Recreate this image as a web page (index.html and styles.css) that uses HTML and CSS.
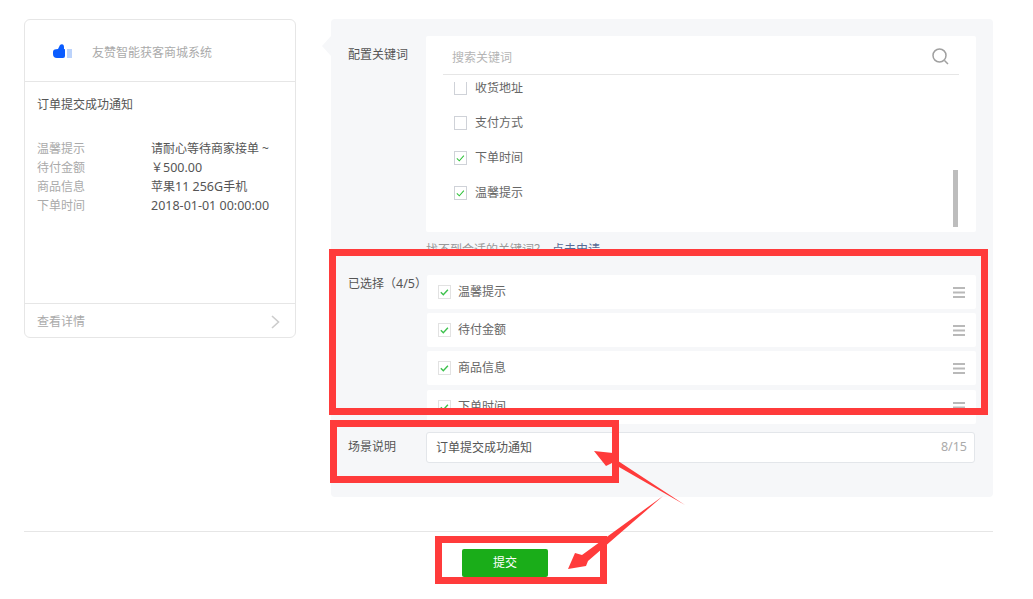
FILE: index.html
```html
<!DOCTYPE html>
<html lang="zh-CN">
<head>
<meta charset="utf-8">
<title>订单提交成功通知</title>
<link rel="stylesheet" href="styles.css">
</head>
<body>
<div class="page">
  <div class="top">
    <aside class="card">
      <div class="card-head">
        <svg class="thumb" width="19" height="15" viewBox="0 0 19 15"><path fill="#0a5cff" d="M5 5L7 1Q8.500-0.300 10 0.500Q11 1 11 3V5H11.500Q12 5 12 6V12Q12 14 10 14H4Q0 14 0 10V8Q0 5.500 3 5.200Z"/><rect fill="#bcd3fb" x="14" y="5" width="5" height="9"/></svg>
        <span class="brand">友赞智能获客商城系统</span>
      </div>
      <div class="card-body">
        <div class="card-title">订单提交成功通知</div>
        <dl class="info">
          <div class="info-row"><dt>温馨提示</dt><dd>请耐心等待商家接单 ~</dd></div>
          <div class="info-row"><dt>待付金额</dt><dd>￥<span class="latin">500.00</span></dd></div>
          <div class="info-row"><dt>商品信息</dt><dd>苹果<span class="latin">11 256G</span>手机</dd></div>
          <div class="info-row"><dt>下单时间</dt><dd><span class="latin">2018-01-01 00:00:00</span></dd></div>
        </dl>
      </div>
      <div class="card-foot">
        <span>查看详情</span>
        <svg width="9" height="14" viewBox="0 0 9 14"><path d="M1 1l6.500 6-6.500 6" fill="none" stroke="#ccc" stroke-width="1.600"/></svg>
      </div>
    </aside>

    <section class="panel">
      <div class="row row-keywords">
        <div class="label">配置关键词</div>
        <div class="content">
          <div class="kw-box">
            <div class="search">
              <span class="placeholder">搜索关键词</span>
              <svg class="search-icon" width="17" height="17" viewBox="0 0 17 17"><circle cx="7.500" cy="7.500" r="6.500" fill="none" stroke="#a0a0a0" stroke-width="1.500"/><path d="M12.500 12.500l3.500 3.500" stroke="#a0a0a0" stroke-width="1.500" fill="none"/></svg>
            </div>
            <ul class="kw-list">
              <li class="kw-item"><span class="box"></span>收货地址</li>
              <li class="kw-item"><span class="box"></span>支付方式</li>
              <li class="kw-item"><span class="box"><svg width="12" height="12" viewBox="0 0 12 12"><path d="M2 6.300l2.700 2.700 5-5.500" fill="none" stroke="#2fc23a" stroke-width="1.100"/></svg></span>下单时间</li>
              <li class="kw-item"><span class="box"><svg width="12" height="12" viewBox="0 0 12 12"><path d="M2 6.300l2.700 2.700 5-5.500" fill="none" stroke="#2fc23a" stroke-width="1.100"/></svg></span>温馨提示</li>
            </ul>
            <div class="scrollbar"></div>
          </div>
          <div class="hint">找不到合适的关键词？<a class="hint-link">点击申请</a></div>
        </div>
      </div>

      <div class="row row-selected">
        <div class="label">已选择（<span class="latin">4/5</span>）</div>
        <div class="selected">
          <div class="sel-item"><span class="box box-soft"><svg width="12" height="12" viewBox="0 0 12 12"><path d="M2 6.300l2.700 2.700 5-5.500" fill="none" stroke="#3cc14c" stroke-width="1.500"/></svg></span><span class="sel-text">温馨提示</span><svg class="drag" width="12" height="11" viewBox="0 0 12 11"><path d="M0 1h12M0 5.500h12M0 10h12" stroke="#b9b9b9" stroke-width="2"/></svg></div>
          <div class="sel-item"><span class="box box-soft"><svg width="12" height="12" viewBox="0 0 12 12"><path d="M2 6.300l2.700 2.700 5-5.500" fill="none" stroke="#3cc14c" stroke-width="1.500"/></svg></span><span class="sel-text">待付金额</span><svg class="drag" width="12" height="11" viewBox="0 0 12 11"><path d="M0 1h12M0 5.500h12M0 10h12" stroke="#b9b9b9" stroke-width="2"/></svg></div>
          <div class="sel-item"><span class="box box-soft"><svg width="12" height="12" viewBox="0 0 12 12"><path d="M2 6.300l2.700 2.700 5-5.500" fill="none" stroke="#3cc14c" stroke-width="1.500"/></svg></span><span class="sel-text">商品信息</span><svg class="drag" width="12" height="11" viewBox="0 0 12 11"><path d="M0 1h12M0 5.500h12M0 10h12" stroke="#b9b9b9" stroke-width="2"/></svg></div>
          <div class="sel-item sel-item-last"><span class="box box-soft"><svg width="12" height="12" viewBox="0 0 12 12"><path d="M2 6.300l2.700 2.700 5-5.500" fill="none" stroke="#3cc14c" stroke-width="1.500"/></svg></span><span class="sel-text">下单时间</span><svg class="drag" width="12" height="11" viewBox="0 0 12 11"><path d="M0 1h12M0 5.500h12M0 10h12" stroke="#b9b9b9" stroke-width="2"/></svg></div>
        </div>
      </div>

      <div class="row row-scene">
        <div class="label">场景说明</div>
        <div class="scene-input">
          <span>订单提交成功通知</span>
          <span class="count latin">8/15</span>
        </div>
      </div>
    </section>
  </div>

  <div class="divider"></div>
  <div class="actions"><button class="submit" type="button">提交</button></div>
</div>

<div class="mark mark-selected"></div>
<div class="mark mark-scene"></div>
<div class="mark mark-submit"></div>
<svg class="arrows" width="1033" height="599" viewBox="0 0 1033 599">
  <polygon fill="#ff3b3b" points="594,451 613,453 612,457 685,505 612,463 606,466"/>
  <polygon fill="#ff3b3b" points="568,569 575,553 582,555 663,496 588,561 586,566"/>
</svg>
</body>
</html>
```
FILE: styles.css
```css
* { box-sizing: border-box; }
html, body { margin: 0; padding: 0; }
body {
  background: #fff;
  color: #555;
  font: 12px/1.5 "Noto Sans", "Noto Sans CJK SC", sans-serif;
  height: 599px;
  overflow: hidden;
}
ul, dl, dd { margin: 0; padding: 0; list-style: none; }
.latin { font-size: 12.5px; }

.page { padding: 19px 40px 0 24px; }
.top { display: flex; gap: 35px; align-items: flex-start; }

/* Preview card */
.card {
  width: 272px;
  height: 319px;
  border: 1px solid #e6e6e6;
  border-radius: 6px;
  display: flex;
  flex-direction: column;
}
.card-head {
  height: 62px;
  flex: none;
  border-bottom: 1px solid #e6e6e6;
  padding-left: 28px;
  display: flex;
  align-items: center;
  gap: 20px;
}
.thumb { flex: none; margin-top: 1px; }
.brand { color: #aaa; margin-top: 4px; }
.card-body { flex: 1; padding: 14px 12px 0; }
.card-title { line-height: 18px; }
.info { margin-top: 25px; }
.info-row { display: flex; line-height: 19px; }
.info-row dt { width: 114px; color: #aaa; flex: none; }
.card-foot {
  height: 34px;
  flex: none;
  border-top: 1px solid #e6e6e6;
  padding: 2px 15px 0 12px;
  display: flex;
  align-items: center;
  justify-content: space-between;
  color: #aaa;
}

/* Config panel */
.panel {
  position: relative;
  width: 662px;
  height: 478px;
  background: #f6f7f9;
  border-radius: 4px;
  padding: 17px 17px 0;
}
.panel::before {
  content: "";
  position: absolute;
  left: -9px;
  top: 17px;
  border: 10px solid transparent;
  border-left: 0;
  border-right: 9px solid #f6f7f9;
}
.row { display: flex; }
.label { width: 78px; flex: none; line-height: 18px; white-space: nowrap; }
.content { flex: 1; }

.row-keywords .label { margin-top: 10px; }
.kw-box {
  position: relative;
  height: 196px;
  background: #fff;
  border-radius: 2px;
  padding: 0 17px;
}
.search {
  height: 39px;
  border-bottom: 1px solid #e6e6e6;
  padding: 3px 10px 0 9px;
  display: flex;
  align-items: center;
  justify-content: space-between;
}
.placeholder { color: #b5b5b5; margin-top: 2px; }
.kw-list {
  height: 150px;
  margin-top: 7px;
  padding-left: 11px;
  overflow: hidden;
  color: #666;
}
.kw-item {
  height: 34px;
  margin-bottom: 1px;
  display: flex;
  align-items: center;
  gap: 8px;
}
.kw-item:first-child { margin-top: -11px; }
.box {
  width: 13px;
  height: 14px;
  flex: none;
  border: 1px solid #cfd2d8;
  background: #fff;
  display: flex;
  align-items: center;
  justify-content: center;
}
.box-soft { border-color: #e2e2e2; }
.scrollbar {
  position: absolute;
  right: 18px;
  top: 134px;
  width: 5px;
  height: 57px;
  background: #bdbdbd;
}
.hint { margin-top: 9px; color: #999; line-height: 18px; }
.hint-link { color: #576b95; margin-left: 6px; }

.row-selected { margin-top: 16px; }
.selected { flex: 1; margin-left: 1px; }
.sel-item {
  height: 34px;
  margin-bottom: 4px;
  background: #fff;
  border-radius: 2px;
  padding: 0 11px;
  display: flex;
  align-items: center;
  gap: 7px;
  color: #666;
}
.sel-item-last { margin-top: 5px; margin-bottom: 0; }
.sel-text { flex: 1; }

.row-scene { margin-top: 8px; align-items: center; }
.row-scene .label { margin-bottom: 2px; }
.scene-input {
  width: 549px;
  height: 31px;
  background: #fff;
  border: 1px solid #e3e6ea;
  border-radius: 3px;
  padding: 0 7px 0 9px;
  display: flex;
  align-items: center;
  justify-content: space-between;
}
.count { color: #aaa; }

/* Footer */
.divider { height: 1px; background: #e6e6e6; margin-top: 34px; }
.actions { padding: 17px 0 0 438px; }
.submit {
  display: block;
  width: 86px;
  height: 28px;
  border: 0;
  border-radius: 2px;
  background: #1aad19;
  color: #fff;
  font: inherit;
  padding: 0;
}

/* Red review annotations over the screenshot */
.mark { position: absolute; border: 7px solid #ff3b3b; }
.mark-selected { left: 329px; top: 249px; width: 659px; height: 166px; }
.mark-scene { left: 330px; top: 420px; width: 289px; height: 63px; }
.mark-submit { left: 435px; top: 536px; width: 172px; height: 48px; }
.arrows { position: absolute; left: 0; top: 0; pointer-events: none; }
```
